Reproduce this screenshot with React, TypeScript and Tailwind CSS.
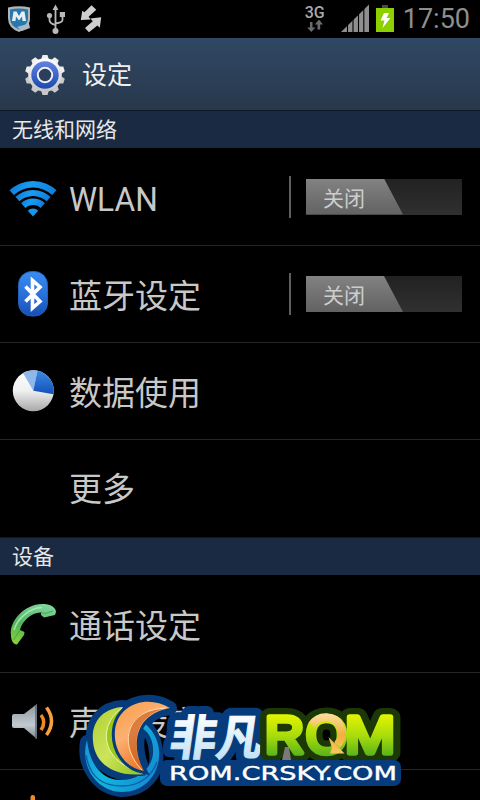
import React from "react"

interface Item {
    label: string
    icon?: React.ReactNode
    toggle?: boolean
}

function WifiIcon() {
    return (
        <svg width="69" height="97" viewBox="0 0 69 97">
            <defs>
                <linearGradient id="wifi" x1="0" x2="1" y1="0" y2="0.3">
                    <stop offset="0" stopColor="#0a5fc0" />
                    <stop offset="0.45" stopColor="#1a9cf2" />
                    <stop offset="1" stopColor="#0c6fd0" />
                </linearGradient>
                <clipPath id="wedge">
                    <path d="M33 68.5 L4 36 V20 H62 V36 Z" />
                </clipPath>
            </defs>
            <g clipPath="url(#wedge)">
                <path d="M-2 68A35 35 0 0 1 68 68H61.5A28.5 28.5 0 0 0 4.5 68Z" fill="url(#wifi)" />
                <path d="M7 68A26 26 0 0 1 59 68H53A20 20 0 0 0 13 68Z" fill="url(#wifi)" />
                <path d="M15.5 68A17.5 17.5 0 0 1 50.5 68H44A11 11 0 0 0 22 68Z" fill="url(#wifi)" />
                <circle cx="33" cy="68" r="7.5" fill="#1a94ec" />
            </g>
        </svg>
    )
}

function BluetoothIcon() {
    return (
        <svg width="69" height="97" viewBox="0 0 69 97">
            <defs>
                <linearGradient id="bt" x1="0" x2="0" y1="0" y2="1">
                    <stop offset="0" stopColor="#3a8cf0" />
                    <stop offset="0.5" stopColor="#2a72dc" />
                    <stop offset="1" stopColor="#1650b4" />
                </linearGradient>
            </defs>
            <rect x="18.5" y="25.5" width="29" height="44.5" rx="13" fill="url(#bt)" stroke="#2560b8" />
            <path d="M25.5 40.5 L40 55.5 L32.5 62 V34.5 L40 41 L25.5 55.5" fill="none" stroke="#fff" strokeWidth="3.6" />
        </svg>
    )
}

function DataIcon() {
    return (
        <svg width="69" height="97" viewBox="0 0 69 97">
            <defs>
                <linearGradient id="pie" x1="0" x2="0" y1="0" y2="1">
                    <stop offset="0" stopColor="#ffffff" />
                    <stop offset="0.5" stopColor="#f0f0f0" />
                    <stop offset="1" stopColor="#a8a8a8" />
                </linearGradient>
                <linearGradient id="slice" x1="0" x2="0" y1="0" y2="1">
                    <stop offset="0" stopColor="#3b8ae6" />
                    <stop offset="1" stopColor="#1450b8" />
                </linearGradient>
            </defs>
            <circle cx="33.3" cy="47.7" r="20.5" fill="url(#pie)" />
            <path d="M33.3 47.7 L23 30 A20.5 20.5 0 0 1 37.5 27.6 Z" fill="#8fb8ea" />
            <path d="M33.3 47.7 L37.5 27.6 A20.5 20.5 0 0 1 53.5 51.2 Z" fill="url(#slice)" />
        </svg>
    )
}

function PhoneIcon() {
    return (
        <svg width="69" height="97" viewBox="0 0 69 97">
            <defs>
                <linearGradient id="phone" x1="0.6" x2="0.3" y1="0" y2="1">
                    <stop offset="0" stopColor="#7fd49a" />
                    <stop offset="0.55" stopColor="#4fb45c" />
                    <stop offset="1" stopColor="#84d038" />
                </linearGradient>
            </defs>
            <path d="M11 60C9 46 25 28 44 29C51 29 56 33 56 37L55 40L44 42.5L41 40L41 37.5C32 37 22 46 20 55L24.5 57L24 60L17 69.5C14 70 11 66 11 60Z" fill="url(#phone)" />
            <path d="M14 55C17 44 29 33 42 32.5" fill="none" stroke="#b4ecc0" strokeWidth="1.6" opacity="0.8" />
            <path d="M41 37.5L45 38.5L53 36M20 55L18 58L13.5 65" fill="none" stroke="#3c9c44" strokeWidth="0.8" />
        </svg>
    )
}

function SoundIcon() {
    return (
        <svg width="69" height="97" viewBox="0 0 69 97">
            <defs>
                <linearGradient id="horn" x1="0" x2="0" y1="0" y2="1">
                    <stop offset="0" stopColor="#8d969e" />
                    <stop offset="0.6" stopColor="#c2cad0" />
                    <stop offset="1" stopColor="#7c858c" />
                </linearGradient>
            </defs>
            <path d="M12 43Q12 41 14 41H24L37 31V66L24 55H14Q12 55 12 53Z" fill="url(#horn)" />
            <path d="M36 32V65.5" stroke="#5d666e" strokeWidth="1.5" />
            <path d="M41 42Q46.5 49 41 57" fill="none" stroke="#f08a20" strokeWidth="3.5" />
            <path d="M46.5 34.5Q56.5 48 46.5 62" fill="none" stroke="#f8a040" strokeWidth="3.5" />
        </svg>
    )
}

function DisplayIcon() {
    return (
        <svg width="69" height="97" viewBox="0 0 69 97">
            <path d="M30.5 36V27Q30.5 25 32.7 25Q35 25 35 27V36Z" fill="#f28a2a" />
        </svg>
    )
}

const teeth = [0, 36, 72, 108, 144, 180, 216, 252, 288, 324]

function GearIcon() {
    return (
        <svg width="42" height="42" viewBox="0 0 42 42">
            <defs>
                <linearGradient id="gear" x1="0" x2="0" y1="0" y2="1">
                    <stop offset="0" stopColor="#ffffff" />
                    <stop offset="1" stopColor="#c4c4c4" />
                </linearGradient>
                <linearGradient id="hub" x1="0" x2="0" y1="0" y2="1">
                    <stop offset="0" stopColor="#6083e0" />
                    <stop offset="1" stopColor="#1c49b0" />
                </linearGradient>
            </defs>
            {teeth.map(angle => (
                <path key={angle} d="M17 6L18.5 1H23.5L25 6Z" fill={angle > 90 && angle < 270 ? "#c9c9c9" : "#eeeeee"} transform={`rotate(${angle} 21 21)`} />
            ))}
            <circle cx="21" cy="21" r="16.8" fill="url(#gear)" />
            <circle cx="21" cy="21" r="13.7" fill="url(#hub)" />
            <circle cx="21" cy="21" r="7.2" fill="#2b3f5c" stroke="#eef0f4" strokeWidth="2" />
        </svg>
    )
}

function StatusBar() {
    return (
        <div className="flex h-[38px] items-start justify-between bg-black">
            <svg width="110" height="38" viewBox="0 0 110 38">
                <path d="M8 7.5Q19 5 30 7.5V20Q29 28 19 32Q8 28 8 18Z" fill="#b4b4b4" />
                <path d="M10 9.5Q19 7.5 28 9.5V19Q27 26 19 29.5Q10 26 10 18Z" fill="#2778ac" />
                <path d="M12 21L13.5 11.5H16.5L19 16L21.5 11.5H24.5L26 21H22.5L22 16.5L19 20.5L16 16.5L15.5 21Z" fill="#e8eef2" />
                <path d="M17 27L29 23.5L30 28L22 31Z" fill="#a9bac4" />
                <path d="M55.5 8V31M49.5 16V20Q49.5 23.5 55.5 25M62.5 14V20Q62.5 22.5 55.5 23.5" stroke="#b9b9b9" strokeWidth="1.8" fill="none" />
                <path d="M55.5 4.5L58.5 10H52.5ZM59.8 12H65V17H59.8Z" fill="#b9b9b9" />
                <circle cx="49.5" cy="15.5" r="2.6" fill="#b9b9b9" />
                <circle cx="55.5" cy="31" r="3" fill="#b9b9b9" />
                <path d="M91.5 5.3L96.3 9.8L88.6 16.8L90.6 19.5L80.8 20L82.3 10.8L84.5 12.3Z" fill="#cfcfcf" />
                <path d="M101.2 17.2L99.8 27.8L97.4 25.6L88.9 32.2L85 28L92.8 21.2L90.3 18.4Z" fill="#cfcfcf" />
            </svg>
            <div className="flex h-full items-start pr-[10px]">
                <div className="flex w-[22px] flex-col items-center pt-[5px]">
                    <span className="font-['Roboto'] text-[16px] leading-[15px] font-medium text-[#a9a9a9]">3G</span>
                    <svg className="overflow-visible" width="16" height="12" viewBox="0 0 16 12">
                        <path d="M3 2H5.5V7.5H8.5L4.3 12L0.2 7.5H3ZM10.5 9.5V4.5H7.8L12 -0.5L16 4.5H13.2V9.5Z" fill="#6b6b6b" />
                    </svg>
                </div>
                <svg className="ml-[14px]" width="60" height="38" viewBox="340 0 60 38">
                    <path d="M341 32L369 4.5V32Z" fill="#8f8f8f" />
                    <path d="M347.5 6V32M353 6V32M358.5 6V32M363.8 6V32" stroke="#000" strokeWidth="1.1" />
                    <rect x="382" y="5" width="6" height="3" fill="#4a4a4a" />
                    <rect x="376" y="8" width="18" height="24" fill="#8cd000" />
                    <path d="M384 13H389L386.5 18H390.5L382.5 28L384.5 20.5H380.5Z" fill="#fff" />
                </svg>
                <span className="ml-[3px] pt-[4px] font-['Roboto'] text-[27px] leading-[30px] text-[#8e8e8e]">17:50</span>
            </div>
        </div>
    )
}

function Toggle() {
    return (
        <div className="flex items-center">
            <div className="h-[42px] w-[2px] bg-[#5e5e5e]" />
            <div className="ml-[15px] h-[36px] w-[156px] bg-linear-to-b from-[#222222] to-[#303030]">
                <div className="flex h-full w-[97px] items-center bg-linear-to-b from-[#828282] to-[#626262] pl-[17px] text-[21px] leading-none text-[#cdcdcd] [clip-path:polygon(0_0,78px_0,100%_100%,0_100%)]">
                    <span className="pt-[5px]">关闭</span>
                </div>
            </div>
        </div>
    )
}

function Section({ title, items }: { title: string, items: Item[] }) {
    return (
        <div>
            <div className="flex h-[38px] items-center border-t border-[#0e1826] bg-[#1a2a42] pt-[2px] pl-[12px] text-[21px] leading-none text-[#e8e8e8]">{title}</div>
            {items.map((item, i) => (
                <div key={item.label} className={`flex items-center ${i === 0 ? "h-[98px]" : "h-[97px]"} ${i === items.length - 1 ? "" : "border-b border-[#262626]"}`}>
                    <div className="h-[97px] w-[69px] shrink-0">{item.icon}</div>
                    <div className={`flex-1 text-[33px] leading-none text-[#c8c8c8] ${item.icon ? "pt-[5px]" : "pt-[1px]"}`}>
                        <span className={item.label === "WLAN" ? "inline-block origin-left scale-x-[0.96]" : ""}>{item.label}</span>
                    </div>
                    {item.toggle && <div className="pr-[18px]"><Toggle /></div>}
                </div>
            ))}
        </div>
    )
}

function RomLetters() {
    return (
        <>
            <text x="265" y="753" textLength="39" lengthAdjust="spacingAndGlyphs">R</text>
            <text x="306" y="753" textLength="41" lengthAdjust="spacingAndGlyphs">O</text>
            <text x="345" y="753" textLength="50" lengthAdjust="spacingAndGlyphs">M</text>
        </>
    )
}

function Watermark() {
    return (
        <svg className="absolute top-[690px] left-[72px]" width="334" height="110" viewBox="72 690 334 110">
            <defs>
                <linearGradient id="ice" x1="0" x2="0" y1="0" y2="1">
                    <stop offset="0.2" stopColor="#ffffff" />
                    <stop offset="1" stopColor="#b4dcf4" />
                </linearGradient>
                <linearGradient id="lime" gradientUnits="userSpaceOnUse" x1="0" x2="0" y1="715" y2="757">
                    <stop offset="0" stopColor="#e2f400" />
                    <stop offset="0.5" stopColor="#a8dc0c" />
                    <stop offset="1" stopColor="#54b01c" />
                </linearGradient>
                <linearGradient id="leaf" x1="0" x2="1" y1="0" y2="1">
                    <stop offset="0" stopColor="#b0d034" />
                    <stop offset="0.5" stopColor="#cce45c" />
                    <stop offset="1" stopColor="#8cc014" />
                </linearGradient>
                <linearGradient id="flame" x1="0" x2="0.6" y1="0" y2="1">
                    <stop offset="0" stopColor="#f89c48" />
                    <stop offset="0.45" stopColor="#fcb070" />
                    <stop offset="1" stopColor="#e86c18" />
                </linearGradient>
                <linearGradient id="ring" x1="0" x2="1" y1="0" y2="0.5">
                    <stop offset="0" stopColor="#1c8cd8" />
                    <stop offset="0.5" stopColor="#10b8dc" />
                    <stop offset="1" stopColor="#1490d4" />
                </linearGradient>
                <linearGradient id="gold" gradientUnits="userSpaceOnUse" x1="0" x2="0" y1="715" y2="755">
                    <stop offset="0" stopColor="#fbdc98" />
                    <stop offset="0.5" stopColor="#f0b040" />
                    <stop offset="1" stopColor="#fac860" />
                </linearGradient>
            </defs>

            {/* backing plates */}
            <g stroke="#063c7c" strokeWidth="14" strokeLinejoin="round" strokeLinecap="round" fill="#063c7c">
                <path d="M87 742C83 765 98 788 121 790C145 790 159 772 156 752C155 738 150 730 143 724" fill="none" />
                <path d="M123 707C103 708 91 722 93 741C94 760 110 778 145 774C119 763 104 738 123 707Z" />
                <path d="M170 708C147 694 118 704 115 730C113 750 125 768 144 771C134 754 130 714 170 708Z" />
            </g>
            <g transform="translate(168 755) skewX(-8)" fontFamily="'Noto Sans CJK SC', sans-serif" fontSize="48" fontWeight="700">
                <text x="0" y="0" textLength="93" lengthAdjust="spacingAndGlyphs" fill="#063c7c" stroke="#063c7c" strokeWidth="17" strokeLinejoin="round">非凡</text>
                <text x="0" y="0" textLength="93" lengthAdjust="spacingAndGlyphs" fill="url(#ice)" stroke="url(#ice)" strokeWidth="1">非凡</text>
            </g>
            <g fontFamily="'Liberation Sans', Arial, sans-serif" fontSize="52" stroke="#1c3806" strokeWidth="18" strokeLinejoin="round" fill="#1c3806">
                <RomLetters />
            </g>
            <path d="M285 747H289L291 760H282Z" fill="#7a7a7a" />
            <rect x="160" y="760" width="241" height="26" rx="7" fill="#063c7c" />

            {/* emblem */}
            <path d="M87 740C79 767 98 792 122 792C146 792 161 772 159 750C158 738 151 728 144 723L141 727C150 733 154 742 153 754C151 769 139 780 121 780C103 780 90 767 87 740Z" fill="url(#ring)" />
            <path d="M86 755C90 779 104 786 122 786C140 786 152 776 157 762" stroke="#1060ac" strokeWidth="1.5" fill="none" />
            <path d="M123 707C103 708 91 722 93 741C94 760 110 778 145 774C117 763 102 738 123 707Z" fill="url(#leaf)" stroke="#063c7c" strokeWidth="3" paintOrder="stroke" />
            <path d="M122 708C99 724 98 760 142 773C116 761 103 738 122 708Z" fill="#9cc81c" />
            <path d="M122 708C99 724 98 760 142 773" stroke="#edf6a8" strokeWidth="1" fill="none" />
            <path d="M170 708C147 694 118 704 115 730C113 750 125 768 144 771C134 754 128 716 170 708Z" fill="url(#flame)" stroke="#063c7c" strokeWidth="6" paintOrder="stroke" />
            <path d="M163 709C121 710 120 750 143 770C134 754 129 719 163 709Z" fill="#bc4c10" opacity="0.5" />
            <path d="M166 708C122 710 120 748 142 770" stroke="#ffe0b0" strokeWidth="1" fill="none" />

            <g fontFamily="'Liberation Sans', Arial, sans-serif" fontSize="52" fill="url(#lime)" stroke="url(#lime)" strokeWidth="5.5" strokeLinejoin="round">
                <RomLetters />
            </g>
            <path d="M312 725C319 714 335 715 340 726C343 733 342 740 337 745" fill="none" stroke="url(#gold)" strokeWidth="8" />
            <path d="M328.5 737L344.5 753.5L330 753.5L332 748Z" fill="url(#gold)" />
            <text x="169" y="780" textLength="228" lengthAdjust="spacingAndGlyphs" fontFamily="'DejaVu Sans', sans-serif" fontSize="19.5" fill="#fff" stroke="#fff" strokeWidth="0.4">ROM.CRSKY.COM</text>
        </svg>
    )
}

const network: Item[] = [
    { label: "WLAN", icon: <WifiIcon />, toggle: true },
    { label: "蓝牙设定", icon: <BluetoothIcon />, toggle: true },
    { label: "数据使用", icon: <DataIcon /> },
    { label: "更多" },
]

const device: Item[] = [
    { label: "通话设定", icon: <PhoneIcon /> },
    { label: "声音设定", icon: <SoundIcon /> },
    { label: "", icon: <DisplayIcon /> },
]

export default function App() {
    return (
        <div className="relative h-[800px] w-[480px] overflow-hidden bg-black font-['Roboto','Noto_Sans_CJK_SC',sans-serif]">
            <StatusBar />
            <div className="flex h-[72px] items-center bg-linear-to-b from-[#304864] to-[#28384c] pt-[1px] pl-[24px]">
                <GearIcon />
                <span className="ml-[16px] pt-[1px] text-[25px] leading-none text-[#f0f0f0]">设定</span>
            </div>
            <Section title="无线和网络" items={network} />
            <Section title="设备" items={device} />
            <Watermark />
        </div>
    )
}
